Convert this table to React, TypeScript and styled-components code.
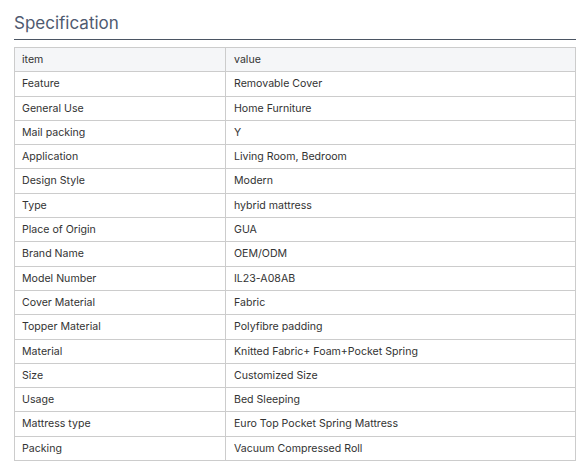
import React from "react";
import styled, { createGlobalStyle } from "styled-components";

const GlobalStyle = createGlobalStyle`
  html, body { margin: 0; padding: 0; background: #ffffff; }
  body { font-family: Inter, "Noto Sans", Arial, sans-serif; }
`;

const Page = styled.div`
  padding: 11px 11px 0 14px;
  width: 562px;
`;

const Title = styled.h2`
  margin: 0;
  font-family: Inter, "Noto Sans", sans-serif;
  font-size: 17px;
  font-weight: 400;
  line-height: 24px;
  color: #4f5a70;
  padding-bottom: 4px;
  border-bottom: 1px solid #4b5563;
`;

const Table = styled.table`
  margin-top: 7px;
  width: 562px;
  border-collapse: collapse;
  table-layout: fixed;
  font-family: Inter, "Noto Sans", sans-serif;
  font-size: 10.6px;
  color: #333333;
`;

const Row = styled.tr<{ $head?: boolean }>`
  background: ${(p) => (p.$head ? "#f5f6f8" : "#ffffff")};
`;

const Cell = styled.td<{ $first?: boolean }>`
  border: 1px solid #cccccc;
  padding: 3px 8px 3px ${(p) => (p.$first ? "7px" : "8px")};
  height: 17.3px;
  line-height: 17.3px;
  text-align: left;
  vertical-align: middle;
  white-space: nowrap;
`;

const rows: [string, string][] = [
  ["Feature", "Removable Cover"],
  ["General Use", "Home Furniture"],
  ["Mail packing", "Y"],
  ["Application", "Living Room, Bedroom"],
  ["Design Style", "Modern"],
  ["Type", "hybrid mattress"],
  ["Place of Origin", "GUA"],
  ["Brand Name", "OEM/ODM"],
  ["Model Number", "IL23-A08AB"],
  ["Cover Material", "Fabric"],
  ["Topper Material", "Polyfibre padding"],
  ["Material", "Knitted Fabric+ Foam+Pocket Spring"],
  ["Size", "Customized Size"],
  ["Usage", "Bed Sleeping"],
  ["Mattress type", "Euro Top Pocket Spring Mattress"],
  ["Packing", "Vacuum Compressed Roll"],
];

export default function App() {
  return (
    <>
      <GlobalStyle />
      <Page>
        <Title>Specification</Title>
        <Table>
          <colgroup>
            <col style={{ width: "211px" }} />
            <col />
          </colgroup>
          <tbody>
            <Row $head>
              <Cell $first>item</Cell>
              <Cell>value</Cell>
            </Row>
            {rows.map(([k, v]) => (
              <Row key={k}>
                <Cell $first>{k}</Cell>
                <Cell>{v}</Cell>
              </Row>
            ))}
          </tbody>
        </Table>
      </Page>
    </>
  );
}
